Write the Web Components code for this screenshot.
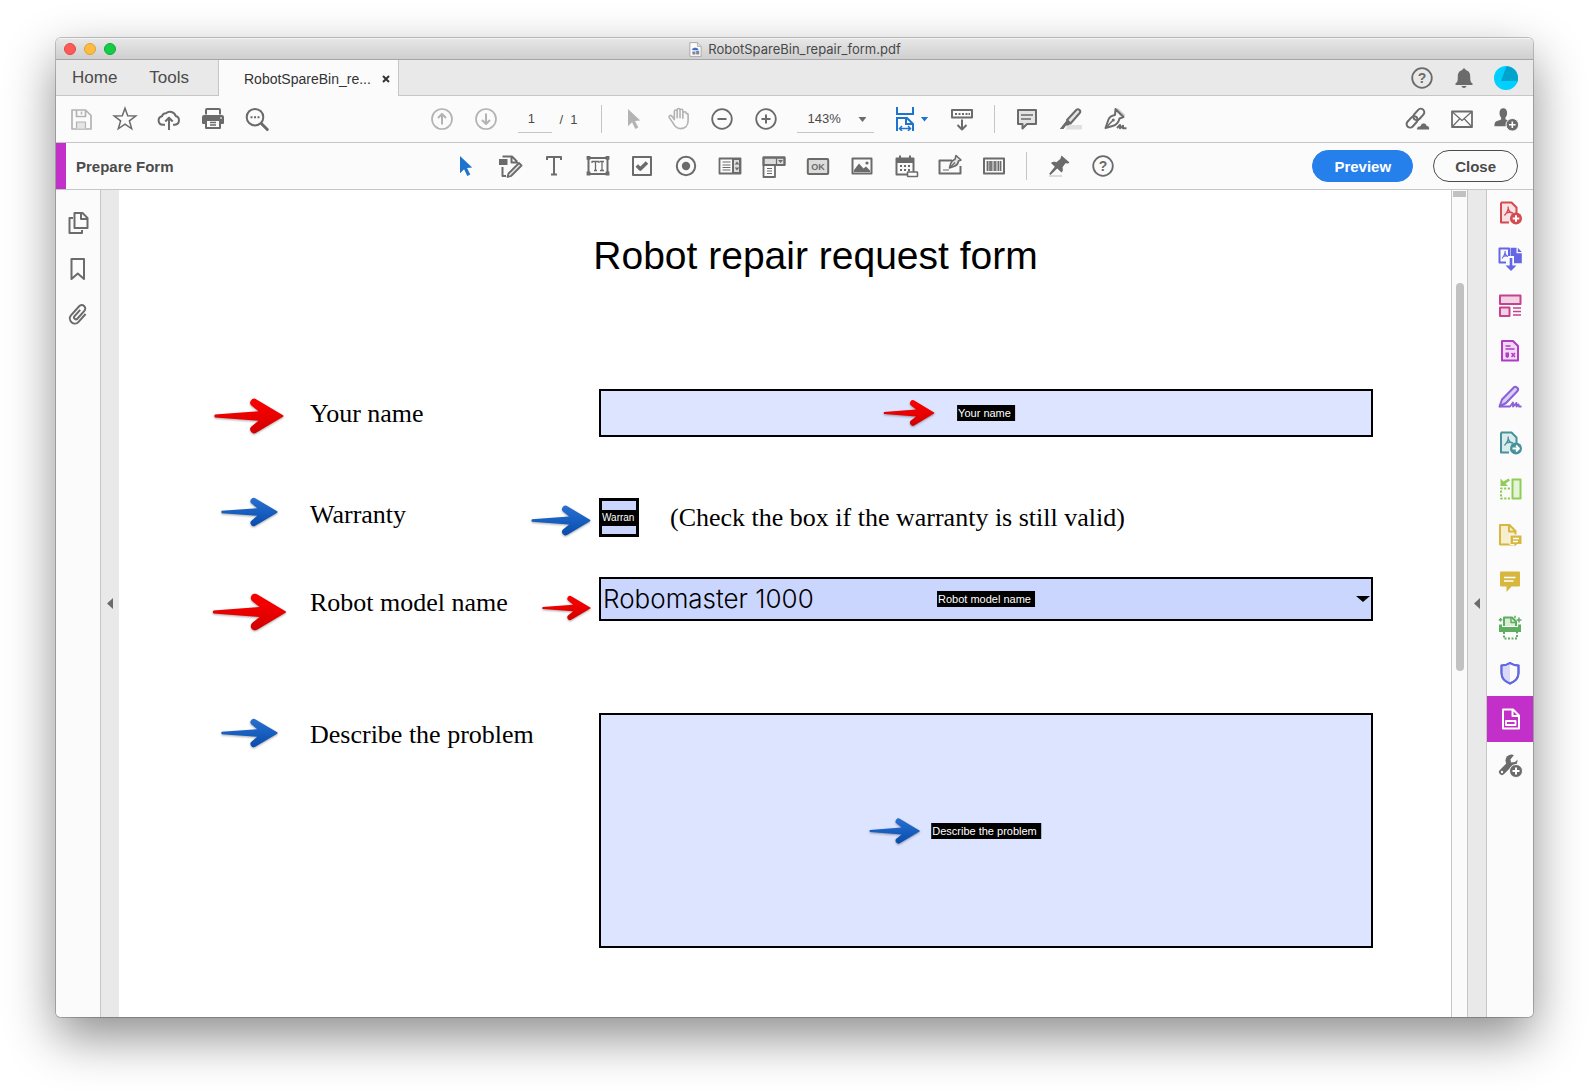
<!DOCTYPE html>
<html lang="en">
<head>
<meta charset="utf-8">
<title>RobotSpareBin_repair_form.pdf</title>
<style>
html, body { height: 100%; }
body { margin: 0; background: #fff; font-family: "Liberation Sans", Arial, sans-serif; color: #4b4b4b; }
</style>
</head>
<body>
<app-window></app-window>
<script>
const BASE = ':host,*{box-sizing:border-box}button,input,select,textarea{font:inherit;color:inherit;margin:0;padding:0;border:0;background:none;border-radius:0;outline:0}';

function define(name, render) {
  customElements.define(name, class extends HTMLElement {
    connectedCallback() {
      if (this.shadowRoot) return;
      const t = document.createElement('template');
      t.innerHTML = render(this);
      this.attachShadow({ mode: 'open' }).append(t.content.cloneNode(true));
    }
  });
}

/* Icons: 24-unit grid, drawn in currentColor */
const PDF = '<path d="M3 1.5h10.500l5 5V13M3 1.500v20h8" fill="none"/>';
const ACRO = '<path d="M10 5.500c1 3-1 6-3.500 9M10.200 7.500c.8 3 2.500 4.500 5 4.500M8.500 12c2-1 4-1 6.500-.2" fill="none" stroke-width="1.300"/>';
const I = {
  save: '<path d="M3 3h13.500L22 8.500V22H3zM7.500 3v6.500h9V3" fill="none" stroke-width="1.700"/><path d="M12.500 4.500v3" stroke-width="1.500"/><path d="M7.500 21.500v-6.500h9v6.500" fill="#e4e4e4" stroke-width="1.200"/>',
  star: '<path d="M12 1.200l2.700 7.600 8.100.2-6.400 4.900 2.300 7.900-6.700-4.600-6.700 4.600 2.300-7.900L1.200 9l8.100-.2z" fill="none" stroke-width="1.500" stroke-linejoin="miter"/>',
  cloud: '<path d="M8 17.800H5.800a4.300 4.300 0 0 1-.8-8.500A4 4 0 0 1 9 6.200 6 6 0 0 1 18.700 9 4.500 4.500 0 0 1 18 17.800h-2" fill="none"/><path d="M12 23V11M8.300 14.500L12 10.700l3.700 3.800" fill="none"/>',
  print: '<path d="M5 7.500V3a1 1 0 0 1 1-1h12a1 1 0 0 1 1 1v4.500" fill="none"/><path d="M3 8h18a2 2 0 0 1 2 2v6a1 1 0 0 1-1 1h-3.500v-3h-13v3H2a1 1 0 0 1-1-1v-6a2 2 0 0 1 2-2z" fill="currentColor" stroke="none"/><path d="M5 13.500V21h14v-7.500" fill="none"/><path d="M9 15.500h6M9 18h6" stroke-width="1.300"/><path d="M19 11h2" stroke="#fff" stroke-width="1"/>',
  find: '<circle cx="10" cy="10.200" r="8.300" fill="none"/><path d="M16.300 16.500l6 6" stroke-width="3" stroke-linecap="round"/><path d="M5.500 9.200h2v2h-2zM9 9.200h2v2H9zM12.500 9.200h2v2h-2z" fill="currentColor" stroke="none"/>',
  up: '<circle cx="12" cy="12" r="10" fill="none" stroke-width="1.700"/><path d="M12 17.500V7M8 11l4-4 4 4" fill="none" stroke-width="2"/>',
  down: '<circle cx="12" cy="12" r="10" fill="none" stroke-width="1.700"/><path d="M12 6.500V17M8 13l4 4 4-4" fill="none" stroke-width="2"/>',
  minus: '<circle cx="12" cy="12" r="9.800" fill="none" stroke-width="1.800"/><path d="M7.500 12h9" stroke-width="2"/>',
  plus: '<circle cx="12" cy="12" r="9.800" fill="none" stroke-width="1.800"/><path d="M7.500 12h9M12 7.500v9" stroke-width="2"/>',
  cursor: '<path d="M6 2l12.200 11.500-5.200.6 3.300 6.500-3 1.500-3.200-6.800L6 19.200z" fill="currentColor" stroke="none"/>',
  hand: '<path d="M7.500 13V4.500a1.500 1.500 0 0 1 3 0V11V2.800a1.500 1.500 0 0 1 3 0V11V3.600a1.500 1.500 0 0 1 3 0V11.500V6.500a1.500 1.500 0 0 1 3.500 0c1.500 0 2 .5 2 1.500v6.500c0 5-3.500 8-8 8-4 0-6-2-8-6l-3.800-5.500c-1-2 1.200-3 2.600-1.700z" transform="translate(1.200 .2) scale(.95)" fill="none" stroke-width="1.700"/>',
  keys: '<path d="M2 3h20v7.500H2z" fill="none"/><path d="M5 6h2v2H5zM8.500 6h2v2h-2zM12 6h2v2h-2zM15.500 6h2v2h-2zM18.500 6h1.500v2h-1.500z" fill="currentColor" stroke="none"/><path d="M12 12.500v9.500M7.500 18l4.500 4.500 4.500-4.500" fill="none"/>',
  comment: '<path d="M3 3h18v14h-9l-4.500 4.500V17H3z" fill="#e4e4e4"/><path d="M6 8h12M6 12h10" stroke-width="1.400"/>',
  marker: '<path d="M8 18h15v4.500H7z" fill="#e0e0e0" stroke="none"/><path d="M8 13L17.500 2.800q1.500-1.300 3 .2t.2 3L11.500 16.500z" fill="#e4e4e4"/><path d="M7.500 13.500l4 3.500-2.500 1.500H7L4.500 22H.8l3.700-4.700z" fill="currentColor" stroke="none"/>',
  pen: '<path d="M13.500 2.500l7.500 7" stroke="#cfcfcf" stroke-width="4"/><path d="M12.500 2l8 8-4 1.500c-1 4-3 6.500-7 7.500L2.500 21l3-8.500c1-2.500 3.500-4 6.500-4.500z" fill="none"/><path d="M3 20.500l6.500-6.700" stroke-width="1.500"/><circle cx="10.300" cy="13" r="1.500" fill="currentColor" stroke="none"/><path d="M14 21l3-3v3.200l3-2.500v2.500h3.500" fill="none"/>',
  link: '<g fill="none" transform="rotate(-48 10 11)"><rect x="-2" y="7.200" width="13" height="7" rx="3.500"/><rect x="8" y="7.200" width="13" height="7" rx="3.500"/></g><path d="M10.500 23c-.3-3 1.800-4.300 3.600-4 1-3.700 5.500-4.200 6.700-.5 2.200 0 3.200 2 2.700 4.500z" fill="currentColor" stroke="#fbfbfb" stroke-width="1"/>',
  mail: '<path d="M2 4.500h20v15.500H2z" fill="none" stroke-width="1.800"/><path d="M2.500 5l9.500 8.500L21.500 5M2.500 19.500l7-7.500M21.500 19.500l-7-7.500" fill="none" stroke-width="1.200"/>',
  user: '<path d="M5.500 6.500C5.300 3 7 1.200 9.300 1.200s4 1.800 3.800 5.300c-.2 2-1 3.500-1.700 4.300v1.500c1 .8 3.500 1.200 5 2.200l-4 4.800H.5c0-3.500.5-4.500 2.500-5.300 1.800-.6 3.500-1 4.200-1.700v-1.500C6.400 10 5.700 8.500 5.500 6.500z" fill="currentColor" stroke="none"/><circle cx="18.300" cy="17.800" r="6.300" fill="currentColor" stroke="#fbfbfb" stroke-width="1"/><path d="M18.300 14.500v6.600M15 17.800h6.600" stroke="#fff" stroke-width="1.600"/>',
  help: '<circle cx="12" cy="12" r="9.800" fill="none" stroke-width="1.800"/><text x="12" y="17" text-anchor="middle" font-size="14" font-weight="700" fill="currentColor" stroke="none" font-family="Liberation Sans,sans-serif">?</text>',
  bell: '<path d="M12 2.500c1 0 1.600.6 1.700 1.500 3.300.8 4.500 3.500 4.500 6.500 0 4 .3 6 2.300 7v1.500h-17v-1.500c2-1 2.300-3 2.300-7 0-3 1.200-5.700 4.500-6.500.1-.9.700-1.500 1.700-1.500zM9.500 20h5c-.3 1.300-1.200 2-2.500 2s-2.200-.7-2.500-2z" fill="currentColor" stroke="none"/>',
  avatar: '<circle cx="12" cy="12" r="12" fill="#00cfff" stroke="none"/><path d="M12.500.2A12 12 0 0 1 23 17l-.5-2.200-15.500.2z" fill="#00a3cc" stroke="none"/>',
  edit: '<path d="M4.500 2.500H14l5 5M13.500 3v5.500H20M4.500 13v9H8" fill="none"/><path d="M1 5h8.500v6H1z" fill="currentColor" stroke="none"/><path d="M10.500 19.500L21 9l2.500 2.500L13 22l-3.500 1z" fill="#e4e4e4" stroke-width="1.800"/>',
  text: '<path d="M5 6V3h14v3M12 3v17.500M9 20.500h6" fill="none" stroke-width="2"/>',
  field: '<path d="M2.500 4h19v16h-19z" fill="none"/><path d="M0 1.800h4v4H0zM20 1.800h4v4h-4zM0 18.200h4v4H0zM20 18.200h4v4h-4z" transform="translate(.6 .3) scale(.95)" fill="currentColor" stroke="none"/><path d="M6 9V7.500h7V9M9.500 7.500v9M8 16.500h3M14 7.500h4M16 7.500v9M14 16.500h4" fill="none" stroke-width="1.300"/>',
  check: '<path d="M3 3h18v18H3z" fill="none"/><path d="M6.800 11.500l3.500 3.500 6.700-6.500" fill="none" stroke-width="3.600"/>',
  radio: '<circle cx="12" cy="12" r="9.200" fill="none"/><circle cx="12" cy="12" r="4.200" fill="currentColor" stroke="none"/>',
  list: '<path d="M15 5h7v14h-7z" fill="#dcdcdc"/><path d="M1.500 4.500h21v15h-21zM15 5v14" fill="none" stroke-width="1.800"/><path d="M4.500 8h8M4.500 11h8M4.500 13.500h8M4.500 16h8" stroke-width="1.200"/><path d="M16.700 10.500L19 7.500l2.300 3zM16.700 13.500l2.300 3 2.300-3z" fill="currentColor" stroke="none"/>',
  combo: '<path d="M1.500 3.500h21V11H1.500z" fill="#dcdcdc"/><path d="M1.500 3.500h21V11H13v12H1.500zM2 11h11" fill="none" stroke-width="1.800"/><path d="M5 14.500h5M5 17h5M5 19.500h5" stroke-width="1.200"/><path d="M14.500 3.500V11" stroke-width="1.200"/><path d="M16 6h5l-2.500 3z" fill="currentColor" stroke="none"/>',
  ok: '<rect x="1.800" y="5" width="20.400" height="15" rx="1" fill="#dcdcdc"/><text x="12" y="16" text-anchor="middle" font-size="9" font-weight="700" fill="currentColor" stroke="none" font-family="Liberation Sans,sans-serif">OK</text>',
  image: '<path d="M2.500 4.500h19v15h-19z" fill="none"/><path d="M4 18v-2l5-6.500 4.500 5 2.500-2 4 4V18z" fill="currentColor" stroke="none"/><circle cx="17" cy="9" r="1.600" fill="currentColor" stroke="none"/>',
  date: '<path d="M2.500 4.500h17v16h-17z" fill="none"/><path d="M2 4h18v5H2zM5 1.500h2v4H5zM15 1.500h2v4h-2z" fill="currentColor" stroke="none"/><path d="M6 11h2v2H6zM10 11h2v2h-2zM14 11h2v2h-2zM6 15h2v2H6zM10 15h2v2h-2zM14 15h2v2h-2z" fill="currentColor" stroke="none"/><rect x="13.500" y="18" width="10" height="4.500" rx=".5" fill="#fff" stroke-width="1.600"/>',
  sign: '<path d="M14 6.500H1.500v13h21V12" fill="none"/><path d="M5 16h6" stroke-width="1.200"/><path d="M18 1.500l5 4.500-2.500 1c-.5 3-2.500 5-5.500 5.700l-3.500 1.300 1.200-4.500c.8-2.500 2-3.500 4.300-4.300z" fill="#e4e4e4" stroke-width="1.600"/><path d="M12 13.500l5-5" stroke-width="1.200"/>',
  barcode: '<path d="M2 4.500h20v15H2z" fill="none"/><path d="M5.500 7v10M9 7v10M13 7v10M18.500 7v10" stroke-width="1.800"/><path d="M7.300 7v10M11 7v10M15 7v10M16.500 7v10" stroke-width="1"/>',
  pin: '<path d="M2 21h13v2H2z" fill="#dcdcdc" stroke="none"/><path d="M14.500 1.500l8 7-1.500 1-2.500-.3-3 4c.8 2.500.2 4.300-1 5.300l-4.300-4L3.500 21l-1.300-1.200 5.600-7L4 9c1.300-1.300 3-1.500 5.300-.8l4-3.200z" fill="currentColor" stroke="none"/>',
  pages: '<path d="M8.500 2h8l5 5v10h-13zM15 2.500V8H21" fill="none"/><path d="M7 7H3.500v15H16v-3" fill="none"/>',
  bookmark: '<path d="M5.500 2h12.500v20l-6.200-5.500L5.500 22z" fill="none"/>',
  clip: '<g transform="rotate(42 12 12)"><path d="M17 7v10.500a5 5 0 0 1-10 0V5.500a3.500 3.500 0 0 1 7 0V16a1.900 1.900 0 0 1-3.800 0V7.500" fill="none" transform="translate(0 -.8)"/></g>',
  create: '<path d="M3 1.500h10.500l5 5V21H3z" fill="#f8e2e3" stroke="none"/>' + PDF + ACRO + '<circle cx="18" cy="17.500" r="6" fill="currentColor" stroke="none"/><path d="M18 14.200v6.600M14.700 17.500h6.600" stroke="#fff"/>',
  combine: '<path d="M8 15.500H1.500V1.500H11v12" fill="none"/><path d="M7 4c.6 2.500-1 5-3 7.500M7 6.500c.8 2 2 3 4 3M5 9.500c1.500-.7 3-.8 5-.2" fill="none" stroke-width="1.200"/><path d="M12.500.8h6v5.500h5.300v10H12.500zM19.800.8l4 4.200h-4z" fill="currentColor" stroke="none"/><path d="M10 9h6v15h-6z" fill="#fbfbfb" stroke="none"/><path d="M13 11v10" stroke-width="2.600"/><path d="M7.500 18.500h11L13 24z" fill="currentColor" stroke="none"/>',
  organize: '<path d="M2 2.500h20.500v8.500H2zM2 14.500h9.500V23H2z" fill="#f1d3e4"/><path d="M15 15h8M15 18.500h8M15 22h8" stroke-width="1.500"/>',
  redact: '<path d="M4 2h11l5 5v14.500H4z" fill="#f1d9f5"/><path d="M7.500 7h5M7.500 10h9" stroke-width="1.500"/><path d="M7.500 13.500h3.500v4l-1.700 1.700-1.800-1.700z" fill="currentColor" stroke="none"/><path d="M13.500 14l3.500 4M17 14l-3.500 4" stroke-width="1.500"/>',
  fillsign: '<path d="M1.500 21.500l2.500-7L16 2.200q1.500-1 3.200.5t.3 3.300L8 18z" fill="#dccff5"/><path d="M1.500 21.500h10.500l3-4v4l3.500-3.500v3.500l2-2 .5 2h2.500" fill="none" stroke-width="1.800"/>',
  exportpdf: '<path d="M3 1.500h10.500l5 5V21H3z" fill="#dcebec" stroke="none"/>' + PDF + ACRO + '<circle cx="18" cy="17.500" r="6" fill="currentColor" stroke="none"/><path d="M14.500 17.500h6M18 14.500l3 3-3 3" fill="none" stroke="#fff" stroke-width="1.800"/>',
  compare: '<path d="M14.500 2.500h8v19h-8z" fill="#e4f4d6"/><path d="M12 11.500H3v10h9" fill="none" stroke-dasharray="2.200 1.500"/><path d="M2.500 1.500V9h7.500L7.500 6.500 12 3.500 10.500 1.500 5.500 4.500z" fill="currentColor" stroke="none"/>',
  sendcomment: '<path d="M2 2h9.500l6 6v13.500H2z" fill="#f7eed0"/><path d="M11 2v6.500h6" fill="none"/><path d="M12 12h12v9.500h-5L16 24.500v-3h-4z" fill="currentColor" stroke="#fbfbfb" stroke-width="1"/><path d="M15 15.500h6M15 18.500h5" stroke="#fff" stroke-width="1.300"/>',
  note: '<path d="M3 2.500h18a1 1 0 0 1 1 1v13a1 1 0 0 1-1 1h-7.500L8.500 23v-5.500H3a1 1 0 0 1-1-1v-13a1 1 0 0 1 1-1z" fill="currentColor" stroke="none"/><path d="M6 8.500h11.500M6 12h9.500" stroke="#fff" stroke-width="1.600"/>',
  scan: '<path d="M6 11V2.500h8l4 4V11" fill="#d9edd9"/><path d="M13 3v4.500h4.500" fill="none" stroke-width="1.500"/><path d="M1 9.500h3V12h16V9.500h3V17H1z" fill="currentColor" stroke="none"/><path d="M6 17v6.500h13V17" fill="#fff" stroke-dasharray="2 1.500"/><path d="M2.500 3v3.500M.8 4.700h3.500M21 2.500v5M18.500 5h5M17 .8v2.500" stroke-width="1.500"/>',
  shield: '<path d="M12 2c3 2 5.500 2.500 8.500 2.500V12c0 5-3.500 8.500-8.500 10.500C7 20.500 3.500 17 3.500 12V4.500C6.500 4.500 9 4 12 2z" fill="#fbfbfb"/><path d="M12 3v18.500C7.500 19.500 4.500 16.500 4.500 12V5.500c3 0 5-.8 7.500-2.500z" fill="#d8daf8" stroke="none"/><path d="M12 2c3 2 5.500 2.500 8.500 2.500V12c0 5-3.500 8.500-8.500 10.500C7 20.500 3.500 17 3.500 12V4.500C6.500 4.500 9 4 12 2z" fill="none"/>',
  form: '<path d="M5 2.500h10l6 6v13H5zM14.500 3v6H20" fill="none"/><path d="M8 14h9.500v4H8z" fill="none" stroke-width="1.800"/>',
  tools: '<path d="M4 19L13 10" stroke-width="6" stroke-linecap="round"/><circle cx="13.500" cy="7.500" r="6" fill="currentColor" stroke="none"/><path d="M13 9.500l-.5-3L17.500 0l5 4-5.500 5z" fill="#fbfbfb" stroke="none"/><circle cx="4" cy="19" r="1.200" fill="#fbfbfb" stroke="none"/><circle cx="18" cy="18" r="6.500" fill="currentColor" stroke="#fbfbfb" stroke-width="1"/><path d="M18 14.500v7M14.500 18h7" stroke="#fff"/>',
  file: '<path d="M3 1h12l6 6v16H3z" fill="#fdfdfd" stroke="#a5a5a5" stroke-width="1.500"/><path d="M15 1v6h6" fill="#ddd" stroke="#a5a5a5" stroke-width="1.200"/><path d="M6 12c2-4 9-4 11 0l-2 1h-6z" fill="#3f6fd0" stroke="none"/><path d="M7 15h5v5H7zM13 14h5v6h-5z" fill="#7d8796" stroke="none"/>',
  close: '<path d="M3 3l18 18M21 3L3 21" stroke-width="6"/>'
};

define('app-icon', el => {
  const s = el.getAttribute('size') || 24;
  return `<style>:host{display:block;flex:none}svg{display:block;overflow:visible}</style>
  <svg width="${s}" height="${s}" viewBox="0 0 24 24" stroke="currentColor" stroke-width="2" stroke-linejoin="round" aria-hidden="true">${I[el.getAttribute('name')]}</svg>`;
});

define('icon-button', el => `<style>${BASE}
  :host{display:flex;flex:none;width:var(--cell,44px);height:var(--cell-h,46px);color:#6b6b6b}
  :host([dim]){color:#b3b3b3}:host([picked]){color:#1e73cc}
  button{flex:1;display:flex;align-items:center;justify-content:center}</style>
  <button aria-label="${el.getAttribute('label') || el.getAttribute('name')}"><app-icon name="${el.getAttribute('name')}"></app-icon></button>`);

define('tool-divider', () => `<style>:host{display:block;flex:none;width:1px;height:28px;margin:0 10px;background:#c6c6c6}</style>`);

const buttons = list => list.map(n => {
  const [name, flag] = n.split(':');
  return `<icon-button name="${name}" ${flag || ''}></icon-button>`;
}).join('');

define('title-bar', () => `<style>${BASE}
  :host{display:grid;grid-template-columns:1fr auto 1fr;align-items:center;height:22px;padding:0 8px;background:linear-gradient(#e6e6e6,#cfcfcf);border-top:1px solid #f4f4f4;border-bottom:1px solid #a6a6a6}
  .lights{display:flex;gap:8px}
  button{width:12px;height:12px;border-radius:50%;border:1px solid #e2463f;background:#fc5b57}
  button:nth-child(2){background:#fdbc40;border-color:#dfa033}button:nth-child(3){background:#14cc46;border-color:#0fa838}
  .name{display:flex;align-items:center;gap:5px;font:13px/20px Inter,"Liberation Sans",sans-serif;color:#484848}</style>
  <div class="lights"><button aria-label="Close window"></button><button aria-label="Minimise"></button><button aria-label="Zoom window"></button></div>
  <div class="name"><app-icon name="file" size="15"></app-icon><span>RobotSpareBin_repair_form.pdf</span></div>`);

define('tab-bar', () => `<style>${BASE}
  :host{display:flex;height:36px;background:#e9e9e9;--cell:42px;--cell-h:35px}
  .plain{display:flex;gap:32px;padding:0 29px 0 16px;border-bottom:1px solid #c6c6c6;width:162px}
  .plain button,.tab button{white-space:nowrap}
  .plain button{font-size:17px}
  .tab{display:flex;align-items:center;justify-content:space-between;width:181px;padding:2px 8px 0 25px;background:#fbfbfb;border:solid #c6c6c6;border-width:0 1px;font-size:14px;color:#333}
  .end{flex:1;display:flex;justify-content:flex-end;padding-right:6px;border-bottom:1px solid #c6c6c6}</style>
  <div class="plain"><button>Home</button><button>Tools</button></div>
  <div class="tab"><button>RobotSpareBin_re...</button><button aria-label="Close tab"><app-icon name="close" size="8"></app-icon></button></div>
  <div class="end">${buttons(['help', 'bell', 'avatar'])}</div>`);

define('main-toolbar', () => `<style>${BASE}
  :host{display:flex;align-items:center;height:47px;background:#fbfbfb;border-bottom:1px solid #c6c6c6;font-size:13px}
  .start{flex:361 1 0;display:flex;padding-left:3px}
  .mid{display:flex;align-items:center}
  .end{flex:390 1 0;display:flex;justify-content:flex-end;padding-right:5px}
  input{width:34px;height:28px;margin-left:10px;padding-right:8px;text-align:center;border-bottom:1px solid #c6c6c6}
  .total{width:49px;padding-left:7px;white-space:pre}
  tool-divider.first{margin-left:0}
  .zoom{position:relative;width:77px;height:28px;margin:0 9px;border-bottom:1px solid #c6c6c6}
  select{appearance:none;width:100%;height:27px;padding-left:10px}
  .caret{width:8px;height:5px;background:#6b6b6b;clip-path:polygon(0 0,100% 0,50% 100%)}
  .zoom .caret{position:absolute;right:8px;top:12px;pointer-events:none}
  .fit{display:flex;align-items:center;gap:3px;width:57px;height:46px;padding-left:10px;color:#1e73cc}
  .fit .caret{background:#1e73cc}</style>
  <div class="start">${buttons(['save:dim', 'star', 'cloud', 'print', 'find'])}</div>
  <div class="mid">${buttons(['up:dim', 'down:dim'])}
    <input aria-label="Page number" value="1"><span class="total">/  1</span>
    <tool-divider class="first"></tool-divider>${buttons(['cursor:dim', 'hand:dim', 'minus', 'plus'])}
    <div class="zoom"><select aria-label="Zoom level"><option>143%</option></select><span class="caret"></span></div>
    <button class="fit" aria-label="Fit width">
      <svg width="24" height="24" viewBox="0 0 24 24" fill="none" stroke="currentColor" stroke-width="2"><path d="M4 0v7h16V0M4 24V11h10l6 6v7M13 11v6h7"/><path d="M6.500 21.500h11M9 19l-2.500 2.500L9 24M15 19l2.500 2.500L15 24" stroke-width="1.500"/></svg>
      <span class="caret"></span></button>${buttons(['keys'])}
    <tool-divider></tool-divider>${buttons(['comment', 'marker', 'pen'])}</div>
  <div class="end">${buttons(['link', 'mail', 'user'])}</div>`);

define('form-toolbar', () => `<style>${BASE}
  :host{display:flex;align-items:center;height:47px;background:#fbfbfb;border-bottom:1px solid #c6c6c6;font-size:15px}
  .start{flex:368 1 0;display:flex;align-items:center;align-self:stretch;border-left:10px solid #c22fc9;padding-left:10px;font-weight:700}
  .mid{display:flex;align-items:center}
  .end{flex:393 1 0;display:flex;justify-content:flex-end;gap:20px;padding-right:15px}
  .end button{height:32px;border-radius:16px;font-weight:700;border:1px solid #4b4b4b;padding:0 21px}
  .end .go{background:#2680eb;border-color:#2680eb;color:#fff}</style>
  <div class="start">Prepare Form</div>
  <div class="mid">${buttons(['cursor:picked', 'edit', 'text', 'field', 'check', 'radio', 'list', 'combo', 'ok', 'image', 'date', 'sign', 'barcode'])}
    <tool-divider></tool-divider>${buttons(['pin', 'help'])}</div>
  <div class="end"><button class="go">Preview</button><button>Close</button></div>`);

define('left-rail', () => `<style>${BASE}
  :host{display:flex;flex-direction:column;flex:none;width:45px;padding-top:10px;background:#fbfbfb;border-right:1px solid #c6c6c6}</style>
  ${buttons(['pages', 'bookmark', 'clip'])}`);

define('fold-strip', () => `<style>${BASE}
  :host{display:flex;flex:none;width:18px;background:#e9e9e9}
  button{flex:1;display:flex;align-items:center;justify-content:center}
  span{width:6px;height:11px;background:#6b6b6b;clip-path:polygon(100% 0,100% 100%,0 50%)}</style>
  <button aria-label="Collapse pane"><span></span></button>`);

define('scroll-track', () => `<style>${BASE}
  :host{display:flex;flex-direction:column;flex:none;width:17px;padding-top:1px;background:#fafafa;border:solid #c6c6c6;border-width:0 1px}
  .cap{height:6px;margin:0 1px;background:#c1c1c1}
  .gap{flex:86}.thumb{flex:388;width:8px;align-self:center;border-radius:4px;background:#c1c1c1}.rest{flex:346}</style>
  <div class="cap"></div><div class="gap"></div><div class="thumb"></div><div class="rest"></div>`);

const RAIL = [['create', '#d5494f'], ['combine', '#6466e6'], ['organize', '#c5428f'], ['redact', '#b03cc4'], ['fillsign', '#8a60d6'], ['exportpdf', '#44929a'], ['compare', '#8fcd56'], ['sendcomment', '#d7b73d'], ['note', '#d7b73d'], ['scan', '#5eae60'], ['shield', '#6169e2'], ['form', '#ffffff'], ['tools', '#6b6b6b']];
define('right-rail', () => `<style>${BASE}
  :host{display:flex;flex-direction:column;flex:none;width:47px;background:#fbfbfb;border-left:1px solid #c6c6c6;--cell:46px}
  .on{background:#c22fc9}</style>
  ${RAIL.map(([n, c]) => `<icon-button name="${n}" style="color:${c}" ${n === 'form' ? 'class="on"' : ''}></icon-button>`).join('')}`);

define('mark-arrow', el => {
  const w = +el.getAttribute('width'), h = Math.round(w * 34 / 70), red = el.getAttribute('tone') === 'red';
  const [a, b, c] = red ? ['#fa0000', '#ea0000', '#cf0000'] : ['#2a6fd0', '#175fc0', '#0a4cab'];
  return `<style>:host{display:block}svg{display:block;overflow:visible;filter:drop-shadow(0 1px 1px rgba(0,0,0,.35))}</style>
  <svg width="${w}" height="${h}" viewBox="0 0 70 34" aria-hidden="true"><defs><linearGradient id="g" x2="0" y2="1"><stop stop-color="${a}"/><stop offset=".5" stop-color="${b}"/><stop offset="1" stop-color="${c}"/></linearGradient></defs>
  <path fill="url(#g)" d="M1 15.600L44.500 12.300L38 7A3.700 3.700 0 0 1 42.500.4L69 16.200Q70 17 69 17.800L42.500 33.600A3.700 3.700 0 0 1 38 27L44.500 21.700L1 18.400Q-.3 17 1 15.600Z"/></svg>`;
});

/* One labelled row of the PDF form, with its field and the arrows pinned to it */
define('form-row', el => {
  const a = n => el.getAttribute(n) || '';
  const type = a('type'), label = a('label');
  const arrow = (w, cls = '') => w ? `<mark-arrow class="${cls}" tone="${a('tone')}" width="${w}"></mark-arrow>` : '';
  const control = {
    text: '<input id="f" type="text">',
    check: '<input id="f" type="checkbox">',
    select: '<select id="f"><option>Robomaster 1000</option></select><span class="caret"></span>',
    area: '<textarea id="f"></textarea>'
  }[type];
  return `<style>${BASE}
  :host{display:grid;grid-template-columns:80px 21px 221px 60px 8px 1fr;align-items:start;color:#000;font:26px/32px "Liberation Serif","Times New Roman",serif}
  .left{grid-column:1;justify-self:center;margin-top:var(--arrow-top)}
  .near{grid-column:4;justify-self:end;margin-top:var(--near-top)}
  label{grid-column:3;margin-top:var(--label-top);white-space:nowrap}
  .cell{grid-column:6;display:flex;align-items:center;gap:31px}
  .box{position:relative;display:flex;width:100%;flex:1 1 auto;border:2px solid #000;background:#dde4ff}
  .box.text{height:48px}.box.area{height:235px}
  .box.select{height:44px;background:#cbd6ff}
  .box.check{flex:none;width:40px;height:39px;border-width:3px;background:#cbd6ff;overflow:hidden}
  input,textarea,select{flex:1;min-width:0;appearance:none;resize:none}
  select{padding-left:2px;font:300 26px/36px Inter,"Liberation Sans",sans-serif}
  .caret{position:absolute;right:1px;top:17px;width:14px;height:6px;background:#000;clip-path:polygon(0 0,100% 0,50% 100%);pointer-events:none}
  .tag{position:absolute;left:50%;top:50%;transform:translate(-50%,-50%);display:flex;padding:0 4px 0 1px;background:#000;color:#fff;font:11px/16px "Liberation Sans",Arial,sans-serif;white-space:nowrap;pointer-events:none}
  .check .tag{left:0;right:0;transform:translate(0,-50%);padding:0;font-size:10px}
  .pin{position:absolute;right:100%;top:50%;transform:translateY(-50%);margin-right:var(--pin-gap)}</style>
  ${arrow(a('left'), 'left')}<label for="f">${label}</label>${arrow(a('near'), 'near')}
  <div class="cell"><div class="box ${type}">${control}<span class="tag">${arrow(a('inner'), 'pin')}${a('tag') || label}</span></div><slot></slot></div>`;
});

define('pdf-page', () => `<style>${BASE}
  :host{display:block;flex:1;min-width:0;background:#fff;padding:42px 78px 0 90px;color:#000}
  h1{margin:0 0 109px;font-size:39px;line-height:48px;font-weight:400;text-align:center;padding-left:49px}
  form{display:block}
  form-row:nth-child(1){--arrow-top:10px;--label-top:9px;--pin-gap:22px}
  form-row:nth-child(2){--arrow-top:0px;--near-top:8px;--label-top:1px;margin-top:61px}
  form-row:nth-child(3){--arrow-top:17px;--near-top:19px;--label-top:10px;margin-top:40px}
  form-row:nth-child(4){--arrow-top:6px;--label-top:6px;--pin-gap:11px;margin-top:83px}</style>
  <h1>Robot repair request form</h1>
  <form>
    <form-row type="text" label="Your name" tone="red" left="70" inner="52"></form-row>
    <form-row type="check" label="Warranty" tag="Warran" tone="blue" left="57" near="60"><span>(Check the box if the warranty is still valid)</span></form-row>
    <form-row type="select" label="Robot model name" tone="red" left="75" near="49"></form-row>
    <form-row type="area" label="Describe the problem" tone="blue" left="57" inner="51"></form-row>
  </form>`);

define('app-window', () => `<style>${BASE}
  :host{display:flex;height:100vh;padding:38px 56px 74px}
  .win{flex:1;min-width:0;display:flex;border-radius:5px;box-shadow:0 0 0 1px rgba(0,0,0,.22),0 20px 50px rgba(0,0,0,.45)}
  .in{flex:1;min-width:0;display:flex;flex-direction:column;border-radius:5px;overflow:hidden}
  .body{flex:1;min-height:0;display:flex}</style>
  <div class="win"><div class="in"><title-bar></title-bar><tab-bar></tab-bar><main-toolbar></main-toolbar><form-toolbar></form-toolbar>
  <div class="body"><left-rail></left-rail><fold-strip></fold-strip><pdf-page></pdf-page><scroll-track></scroll-track><fold-strip></fold-strip><right-rail></right-rail></div></div></div>`);
</script>
</body>
</html>
